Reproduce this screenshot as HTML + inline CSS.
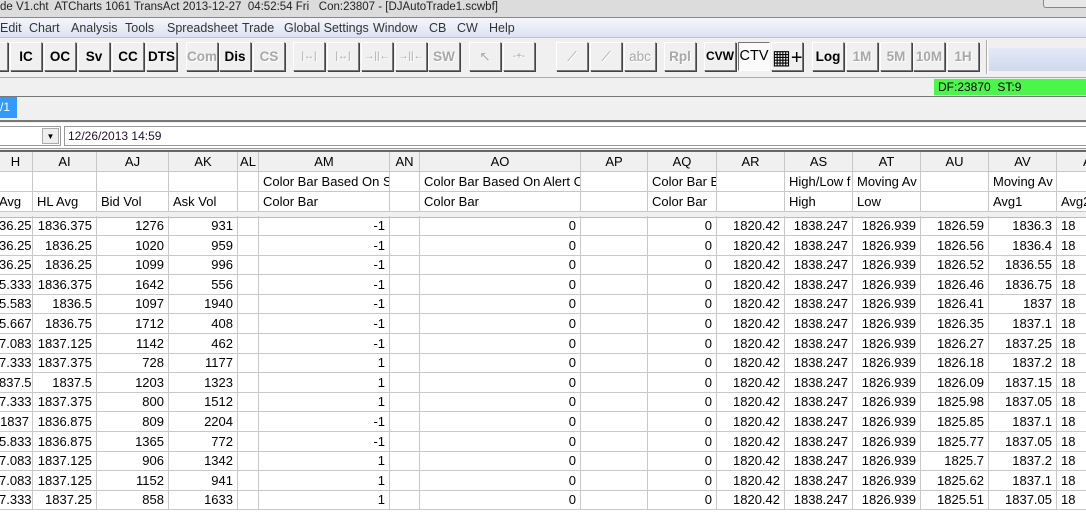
<!DOCTYPE html>
<html><head><meta charset="utf-8"><style>
*{margin:0;padding:0;box-sizing:border-box}
body{width:1086px;height:512px;overflow:hidden;background:#f0f0f0;font-family:"Liberation Sans",sans-serif;position:relative}
.a{position:absolute}
.title{left:0;top:0;width:1086px;height:17px;background:#dcdcdc;font-size:11.5px;color:#222;line-height:14px;white-space:nowrap;padding-left:0}
.menu{left:0;top:17px;width:1086px;height:21px;background:linear-gradient(#f4f6fb,#dde3f3);border-top:1px solid #888;border-bottom:1px solid #b9c1d6;font-size:12.5px;color:#333;line-height:20px;white-space:nowrap}
.menu span{position:absolute;top:0}
.b{position:absolute;top:42px;height:29px;width:32px;background:#f0f0f0;border:1px solid;border-color:#fff #777 #777 #fff;box-shadow:1px 1px 0 #444;font-weight:bold;font-size:13.5px;text-align:center;line-height:27px;color:#000;white-space:nowrap;overflow:hidden}
.g{color:#a8a8a8;text-shadow:1px 1px 0 #fff}
.s{font-size:10px;font-weight:normal}
.grid{left:0;top:150px;width:1086px;height:362px;background:#fff;border-top:2px solid #666}
.r{position:absolute;left:0;height:20px;width:1130px;border-bottom:1px solid #c8c8c8;font-size:13px;line-height:19px;color:#000;white-space:nowrap}
.r div{position:absolute;top:0;height:100%;border-right:1px solid #c8c8c8;overflow:hidden;padding:0 4px}
.h div{text-align:center}
.d div{text-align:right}
.t div{text-align:left}
</style></head><body>
<div class="a title">de V1.cht&nbsp; ATCharts 1061 TransAct 2013-12-27&nbsp; 04:52:54 Fri&nbsp;&nbsp; Con:23807 - [DJAutoTrade1.scwbf]</div>
<div class="a" style="left:1043px;top:0;width:45px;height:8px;border:1px solid #888;border-top:0;border-radius:0 0 0 3px;background:#e8e8e8"></div>
<div class="a menu">
<span style="left:0">Edit</span><span style="left:29px">Chart</span><span style="left:71px">Analysis</span><span style="left:125px">Tools</span><span style="left:167px">Spreadsheet</span><span style="left:242px">Trade</span><span style="left:284px">Global Settings</span><span style="left:373px">Window</span><span style="left:429px">CB</span><span style="left:457px">CW</span><span style="left:489px">Help</span>
</div>
<div class="a" style="left:0;top:38px;width:1086px;height:38px;background:#f0f0f0"></div>
<div class="b" style="left:-24px"></div>
<div class="b" style="left:10px">IC</div><div class="b" style="left:44px">OC</div><div class="b" style="left:78px">Sv</div><div class="b" style="left:112px">CC</div><div class="b" style="left:146px;width:31px">DTS</div>
<div class="b g" style="left:186px">Com</div><div class="b" style="left:219px">Dis</div><div class="b g" style="left:253px">CS</div>
<div class="b g s" style="left:293px">|↔|</div><div class="b g s" style="left:327px">|↔|</div><div class="b g s" style="left:361px">→||←</div><div class="b g s" style="left:395px">→||←</div><div class="b g" style="left:428px">SW</div>
<div class="b g" style="left:469px;font-weight:normal">↖</div><div class="b g s" style="left:503px">-+-</div>
<div class="b g" style="left:556px;font-weight:normal">⟋</div><div class="b g" style="left:590px;font-weight:normal">⟋</div><div class="b g" style="left:624px;font-weight:normal">abc</div>
<div class="b g" style="left:664px">Rpl</div>
<div class="b" style="left:704px;font-size:12px">CVW</div>
<div class="b" style="left:738px;background:#fafafa;border-color:#777 #fff #fff #777;box-shadow:none;font-weight:normal;font-size:14.5px">CTV</div>
<div class="b" style="left:771px;font-weight:normal;font-size:20px;line-height:30px">▦+</div>
<div class="b" style="left:812px">Log</div>
<div class="b g" style="left:846px">1M</div><div class="b g" style="left:880px">5M</div><div class="b g" style="left:913px">10M</div><div class="b g" style="left:947px">1H</div>
<div class="a" style="left:986px;top:40px;width:2px;height:34px;border-left:1px solid #aaa;border-right:1px solid #fff"></div>
<div class="a" style="left:989px;top:48px;width:97px;height:23px;background:linear-gradient(#e4e9f6,#cfd8ee)"></div>
<div class="a" style="left:0;top:77px;width:1086px;height:20px;border-top:1px solid #aaa;border-bottom:1px solid #777"></div>
<div class="a" style="left:934px;top:79px;width:152px;height:16px;background:#4cf54c;font-size:12px;line-height:16px;padding-left:4px">DF:23870&nbsp; ST:9</div>
<div class="a" style="left:0;top:97px;width:17px;height:21px;background:#3399ff;color:#fff;font-size:12px;line-height:20px">/1</div>
<div class="a" style="left:0;top:120px;width:1086px;height:3px;border-top:2px solid #777"></div>
<div class="a" style="left:0;top:123px;width:1086px;height:26px;background:#fff;border-bottom:1px solid #999"></div>
<div class="a" style="left:0;top:126px;width:61px;height:20px;border:1px solid #999;border-left:0;background:#fff"></div>
<div class="a" style="left:42px;top:128px;width:17px;height:16px;background:#eee;border:1px solid #aaa;font-size:8px;text-align:center;line-height:15px">▼</div>
<div class="a" style="left:64px;top:126px;width:1022px;height:20px;border:1px solid #999;border-right:0;background:#fff;font-size:12px;line-height:18px;padding-left:3px;color:#201030">12/26/2013 14:59</div>
<div class="a grid">
<div class="r h" style="top:0;background:#f0f0f0"><div style="left:-1px;width:34px">H</div><div style="left:33px;width:64px">AI</div><div style="left:97px;width:72px">AJ</div><div style="left:169px;width:69px">AK</div><div style="left:238px;width:21px;padding:0 2px">AL</div><div style="left:259px;width:131px">AM</div><div style="left:390px;width:30px">AN</div><div style="left:420px;width:161px">AO</div><div style="left:581px;width:67px">AP</div><div style="left:648px;width:69px">AQ</div><div style="left:717px;width:68px">AR</div><div style="left:785px;width:68px">AS</div><div style="left:853px;width:68px">AT</div><div style="left:921px;width:68px">AU</div><div style="left:989px;width:68px">AV</div><div style="left:1057px;width:68px;text-align:left;padding-left:26px">A</div></div>
<div class="r t" style="top:20px"><div style="left:-1px;width:34px"></div><div style="left:33px;width:64px"></div><div style="left:97px;width:72px"></div><div style="left:169px;width:69px"></div><div style="left:238px;width:21px"></div><div style="left:259px;width:131px">Color Bar Based On S</div><div style="left:390px;width:30px"></div><div style="left:420px;width:161px">Color Bar Based On Alert C</div><div style="left:581px;width:67px"></div><div style="left:648px;width:69px">Color Bar B</div><div style="left:717px;width:68px"></div><div style="left:785px;width:68px">High/Low f</div><div style="left:853px;width:68px">Moving Av</div><div style="left:921px;width:68px"></div><div style="left:989px;width:68px">Moving Av</div><div style="left:1057px;width:68px"></div></div>
<div class="r t" style="top:40px"><div style="left:-1px;width:34px;padding:0">Avg</div><div style="left:33px;width:64px">HL Avg</div><div style="left:97px;width:72px">Bid Vol</div><div style="left:169px;width:69px">Ask Vol</div><div style="left:238px;width:21px"></div><div style="left:259px;width:131px">Color Bar</div><div style="left:390px;width:30px"></div><div style="left:420px;width:161px">Color Bar</div><div style="left:581px;width:67px"></div><div style="left:648px;width:69px">Color Bar</div><div style="left:717px;width:68px"></div><div style="left:785px;width:68px">High</div><div style="left:853px;width:68px">Low</div><div style="left:921px;width:68px"></div><div style="left:989px;width:68px">Avg1</div><div style="left:1057px;width:68px">Avg2</div></div>
<div class="a" style="left:0;top:60px;width:1086px;height:6px;background:#f0f0f0;border-bottom:1px solid #bbb"></div>
</div>
<div class="a" style="left:0;top:216px;width:1086px">
<div class="r d" style="top:0"><div style="left:-1px;width:34px;padding:0 3px 0 0">36.25</div><div style="left:33px;width:64px">1836.375</div><div style="left:97px;width:72px">1276</div><div style="left:169px;width:69px">931</div><div style="left:238px;width:21px"></div><div style="left:259px;width:131px">-1</div><div style="left:390px;width:30px"></div><div style="left:420px;width:161px">0</div><div style="left:581px;width:67px"></div><div style="left:648px;width:69px">0</div><div style="left:717px;width:68px">1820.42</div><div style="left:785px;width:68px">1838.247</div><div style="left:853px;width:68px">1826.939</div><div style="left:921px;width:68px">1826.59</div><div style="left:989px;width:68px">1836.3</div><div style="left:1057px;width:68px;text-align:left">18</div></div>
<div class="r d" style="top:19.6px"><div style="left:-1px;width:34px;padding:0 3px 0 0">36.25</div><div style="left:33px;width:64px">1836.25</div><div style="left:97px;width:72px">1020</div><div style="left:169px;width:69px">959</div><div style="left:238px;width:21px"></div><div style="left:259px;width:131px">-1</div><div style="left:390px;width:30px"></div><div style="left:420px;width:161px">0</div><div style="left:581px;width:67px"></div><div style="left:648px;width:69px">0</div><div style="left:717px;width:68px">1820.42</div><div style="left:785px;width:68px">1838.247</div><div style="left:853px;width:68px">1826.939</div><div style="left:921px;width:68px">1826.56</div><div style="left:989px;width:68px">1836.4</div><div style="left:1057px;width:68px;text-align:left">18</div></div>
<div class="r d" style="top:39.2px"><div style="left:-1px;width:34px;padding:0 3px 0 0">36.25</div><div style="left:33px;width:64px">1836.25</div><div style="left:97px;width:72px">1099</div><div style="left:169px;width:69px">996</div><div style="left:238px;width:21px"></div><div style="left:259px;width:131px">-1</div><div style="left:390px;width:30px"></div><div style="left:420px;width:161px">0</div><div style="left:581px;width:67px"></div><div style="left:648px;width:69px">0</div><div style="left:717px;width:68px">1820.42</div><div style="left:785px;width:68px">1838.247</div><div style="left:853px;width:68px">1826.939</div><div style="left:921px;width:68px">1826.52</div><div style="left:989px;width:68px">1836.55</div><div style="left:1057px;width:68px;text-align:left">18</div></div>
<div class="r d" style="top:58.8px"><div style="left:-1px;width:34px;padding:0 3px 0 0">5.333</div><div style="left:33px;width:64px">1836.375</div><div style="left:97px;width:72px">1642</div><div style="left:169px;width:69px">556</div><div style="left:238px;width:21px"></div><div style="left:259px;width:131px">-1</div><div style="left:390px;width:30px"></div><div style="left:420px;width:161px">0</div><div style="left:581px;width:67px"></div><div style="left:648px;width:69px">0</div><div style="left:717px;width:68px">1820.42</div><div style="left:785px;width:68px">1838.247</div><div style="left:853px;width:68px">1826.939</div><div style="left:921px;width:68px">1826.46</div><div style="left:989px;width:68px">1836.75</div><div style="left:1057px;width:68px;text-align:left">18</div></div>
<div class="r d" style="top:78.4px"><div style="left:-1px;width:34px;padding:0 3px 0 0">5.583</div><div style="left:33px;width:64px">1836.5</div><div style="left:97px;width:72px">1097</div><div style="left:169px;width:69px">1940</div><div style="left:238px;width:21px"></div><div style="left:259px;width:131px">-1</div><div style="left:390px;width:30px"></div><div style="left:420px;width:161px">0</div><div style="left:581px;width:67px"></div><div style="left:648px;width:69px">0</div><div style="left:717px;width:68px">1820.42</div><div style="left:785px;width:68px">1838.247</div><div style="left:853px;width:68px">1826.939</div><div style="left:921px;width:68px">1826.41</div><div style="left:989px;width:68px">1837</div><div style="left:1057px;width:68px;text-align:left">18</div></div>
<div class="r d" style="top:98px"><div style="left:-1px;width:34px;padding:0 3px 0 0">5.667</div><div style="left:33px;width:64px">1836.75</div><div style="left:97px;width:72px">1712</div><div style="left:169px;width:69px">408</div><div style="left:238px;width:21px"></div><div style="left:259px;width:131px">-1</div><div style="left:390px;width:30px"></div><div style="left:420px;width:161px">0</div><div style="left:581px;width:67px"></div><div style="left:648px;width:69px">0</div><div style="left:717px;width:68px">1820.42</div><div style="left:785px;width:68px">1838.247</div><div style="left:853px;width:68px">1826.939</div><div style="left:921px;width:68px">1826.35</div><div style="left:989px;width:68px">1837.1</div><div style="left:1057px;width:68px;text-align:left">18</div></div>
<div class="r d" style="top:117.6px"><div style="left:-1px;width:34px;padding:0 3px 0 0">7.083</div><div style="left:33px;width:64px">1837.125</div><div style="left:97px;width:72px">1142</div><div style="left:169px;width:69px">462</div><div style="left:238px;width:21px"></div><div style="left:259px;width:131px">-1</div><div style="left:390px;width:30px"></div><div style="left:420px;width:161px">0</div><div style="left:581px;width:67px"></div><div style="left:648px;width:69px">0</div><div style="left:717px;width:68px">1820.42</div><div style="left:785px;width:68px">1838.247</div><div style="left:853px;width:68px">1826.939</div><div style="left:921px;width:68px">1826.27</div><div style="left:989px;width:68px">1837.25</div><div style="left:1057px;width:68px;text-align:left">18</div></div>
<div class="r d" style="top:137.2px"><div style="left:-1px;width:34px;padding:0 3px 0 0">7.333</div><div style="left:33px;width:64px">1837.375</div><div style="left:97px;width:72px">728</div><div style="left:169px;width:69px">1177</div><div style="left:238px;width:21px"></div><div style="left:259px;width:131px">1</div><div style="left:390px;width:30px"></div><div style="left:420px;width:161px">0</div><div style="left:581px;width:67px"></div><div style="left:648px;width:69px">0</div><div style="left:717px;width:68px">1820.42</div><div style="left:785px;width:68px">1838.247</div><div style="left:853px;width:68px">1826.939</div><div style="left:921px;width:68px">1826.18</div><div style="left:989px;width:68px">1837.2</div><div style="left:1057px;width:68px;text-align:left">18</div></div>
<div class="r d" style="top:156.8px"><div style="left:-1px;width:34px;padding:0 3px 0 0">837.5</div><div style="left:33px;width:64px">1837.5</div><div style="left:97px;width:72px">1203</div><div style="left:169px;width:69px">1323</div><div style="left:238px;width:21px"></div><div style="left:259px;width:131px">1</div><div style="left:390px;width:30px"></div><div style="left:420px;width:161px">0</div><div style="left:581px;width:67px"></div><div style="left:648px;width:69px">0</div><div style="left:717px;width:68px">1820.42</div><div style="left:785px;width:68px">1838.247</div><div style="left:853px;width:68px">1826.939</div><div style="left:921px;width:68px">1826.09</div><div style="left:989px;width:68px">1837.15</div><div style="left:1057px;width:68px;text-align:left">18</div></div>
<div class="r d" style="top:176.4px"><div style="left:-1px;width:34px;padding:0 3px 0 0">7.333</div><div style="left:33px;width:64px">1837.375</div><div style="left:97px;width:72px">800</div><div style="left:169px;width:69px">1512</div><div style="left:238px;width:21px"></div><div style="left:259px;width:131px">1</div><div style="left:390px;width:30px"></div><div style="left:420px;width:161px">0</div><div style="left:581px;width:67px"></div><div style="left:648px;width:69px">0</div><div style="left:717px;width:68px">1820.42</div><div style="left:785px;width:68px">1838.247</div><div style="left:853px;width:68px">1826.939</div><div style="left:921px;width:68px">1825.98</div><div style="left:989px;width:68px">1837.05</div><div style="left:1057px;width:68px;text-align:left">18</div></div>
<div class="r d" style="top:196px"><div style="left:-1px;width:34px;padding:0 3px 0 0">1837</div><div style="left:33px;width:64px">1836.875</div><div style="left:97px;width:72px">809</div><div style="left:169px;width:69px">2204</div><div style="left:238px;width:21px"></div><div style="left:259px;width:131px">-1</div><div style="left:390px;width:30px"></div><div style="left:420px;width:161px">0</div><div style="left:581px;width:67px"></div><div style="left:648px;width:69px">0</div><div style="left:717px;width:68px">1820.42</div><div style="left:785px;width:68px">1838.247</div><div style="left:853px;width:68px">1826.939</div><div style="left:921px;width:68px">1825.85</div><div style="left:989px;width:68px">1837.1</div><div style="left:1057px;width:68px;text-align:left">18</div></div>
<div class="r d" style="top:215.6px"><div style="left:-1px;width:34px;padding:0 3px 0 0">5.833</div><div style="left:33px;width:64px">1836.875</div><div style="left:97px;width:72px">1365</div><div style="left:169px;width:69px">772</div><div style="left:238px;width:21px"></div><div style="left:259px;width:131px">-1</div><div style="left:390px;width:30px"></div><div style="left:420px;width:161px">0</div><div style="left:581px;width:67px"></div><div style="left:648px;width:69px">0</div><div style="left:717px;width:68px">1820.42</div><div style="left:785px;width:68px">1838.247</div><div style="left:853px;width:68px">1826.939</div><div style="left:921px;width:68px">1825.77</div><div style="left:989px;width:68px">1837.05</div><div style="left:1057px;width:68px;text-align:left">18</div></div>
<div class="r d" style="top:235.2px"><div style="left:-1px;width:34px;padding:0 3px 0 0">7.083</div><div style="left:33px;width:64px">1837.125</div><div style="left:97px;width:72px">906</div><div style="left:169px;width:69px">1342</div><div style="left:238px;width:21px"></div><div style="left:259px;width:131px">1</div><div style="left:390px;width:30px"></div><div style="left:420px;width:161px">0</div><div style="left:581px;width:67px"></div><div style="left:648px;width:69px">0</div><div style="left:717px;width:68px">1820.42</div><div style="left:785px;width:68px">1838.247</div><div style="left:853px;width:68px">1826.939</div><div style="left:921px;width:68px">1825.7</div><div style="left:989px;width:68px">1837.2</div><div style="left:1057px;width:68px;text-align:left">18</div></div>
<div class="r d" style="top:254.8px"><div style="left:-1px;width:34px;padding:0 3px 0 0">7.083</div><div style="left:33px;width:64px">1837.125</div><div style="left:97px;width:72px">1152</div><div style="left:169px;width:69px">941</div><div style="left:238px;width:21px"></div><div style="left:259px;width:131px">1</div><div style="left:390px;width:30px"></div><div style="left:420px;width:161px">0</div><div style="left:581px;width:67px"></div><div style="left:648px;width:69px">0</div><div style="left:717px;width:68px">1820.42</div><div style="left:785px;width:68px">1838.247</div><div style="left:853px;width:68px">1826.939</div><div style="left:921px;width:68px">1825.62</div><div style="left:989px;width:68px">1837.1</div><div style="left:1057px;width:68px;text-align:left">18</div></div>
<div class="r d" style="top:274.4px"><div style="left:-1px;width:34px;padding:0 3px 0 0">7.333</div><div style="left:33px;width:64px">1837.25</div><div style="left:97px;width:72px">858</div><div style="left:169px;width:69px">1633</div><div style="left:238px;width:21px"></div><div style="left:259px;width:131px">1</div><div style="left:390px;width:30px"></div><div style="left:420px;width:161px">0</div><div style="left:581px;width:67px"></div><div style="left:648px;width:69px">0</div><div style="left:717px;width:68px">1820.42</div><div style="left:785px;width:68px">1838.247</div><div style="left:853px;width:68px">1826.939</div><div style="left:921px;width:68px">1825.51</div><div style="left:989px;width:68px">1837.05</div><div style="left:1057px;width:68px;text-align:left">18</div></div>
</div>
</body></html>
